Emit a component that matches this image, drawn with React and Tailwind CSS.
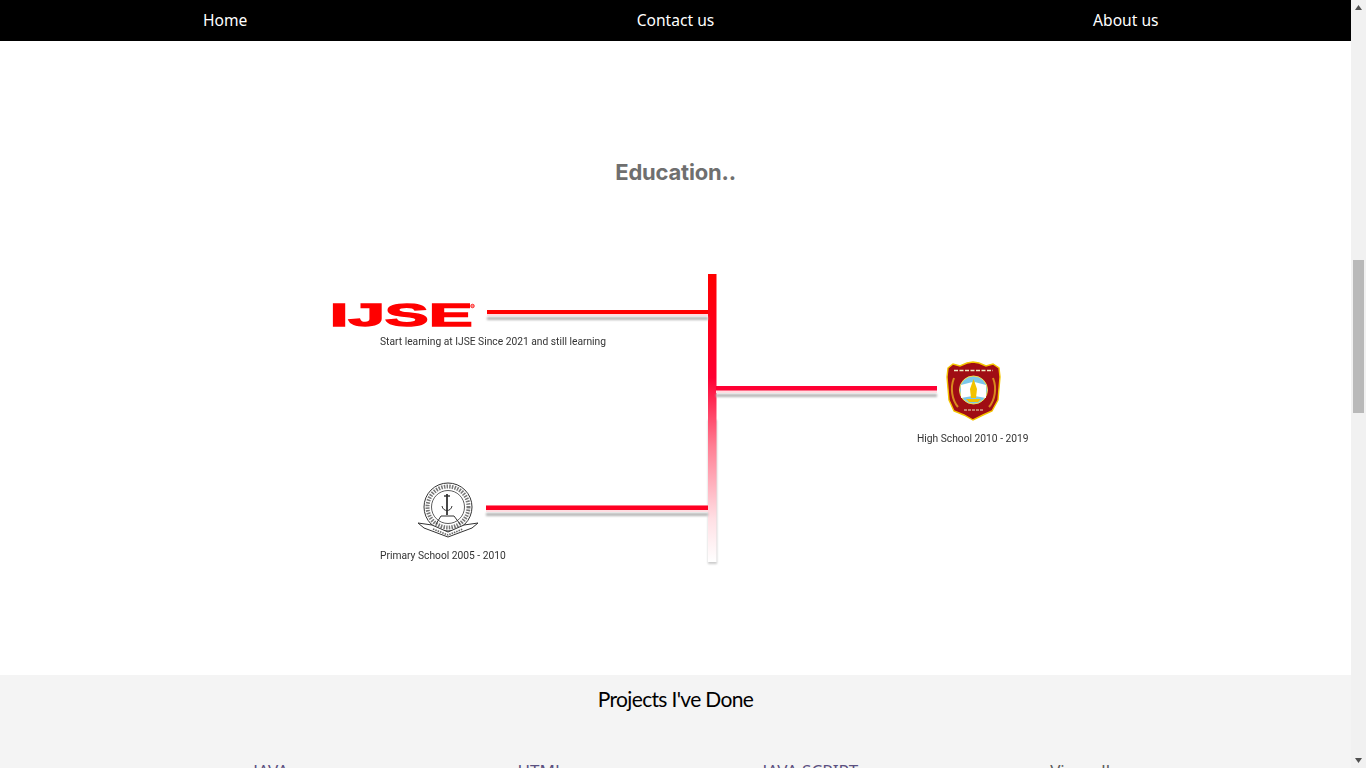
import React from 'react';

const navItems = ['Home', 'Contact us', 'About us'];

const projectLinks = [
  { label: 'JAVA', className: 'text-[#5b5080]' },
  { label: 'HTML', className: 'text-[#5b5080]' },
  { label: 'JAVA SCRIPT', className: 'text-[#5b5080]' },
  { label: 'View all', className: 'text-[#5a5a5a]' },
];

// the picture of the education timeline, coordinates are page px minus the svg origin (320, 260)
function EducationTimeline() {
  return (
    <svg width="720" height="320" viewBox="0 0 720 320" className="block blur-[0.35px]">
      <defs>
        <linearGradient id="spine" x1="0" y1="0" x2="0" y2="1">
          <stop offset="0" stopColor="#ff0000" />
          <stop offset="0.36" stopColor="#ff0033" />
          <stop offset="0.6" stopColor="#ff7f94" />
          <stop offset="0.85" stopColor="#ffdfe4" />
          <stop offset="1" stopColor="#ffffff" />
        </linearGradient>
        <filter id="soft" x="-10%" y="-150%" width="120%" height="400%">
          <feGaussianBlur stdDeviation="1.3" />
        </filter>
        <filter id="softSpine" x="-100%" y="-5%" width="300%" height="110%">
          <feGaussianBlur stdDeviation="0.8" />
        </filter>
      </defs>

      {/* spine */}
      <rect x="388" y="160" width="9" height="144" fill="#b4b4b4" opacity="0.7" filter="url(#softSpine)" />
      <rect x="388" y="14" width="8.5" height="288" fill="url(#spine)" />

      {/* branches */}
      <rect x="167" y="57" width="221" height="3" fill="#b4b4b4" filter="url(#soft)" />
      <rect x="167" y="50" width="221" height="6" fill="#ffdde2" />
      <rect x="167" y="50" width="221" height="4" fill="#ff0000" />

      <rect x="396" y="134" width="221" height="3" fill="#b4b4b4" filter="url(#soft)" />
      <rect x="396" y="126" width="221" height="7" fill="#ffdde2" />
      <rect x="396" y="126" width="221" height="4.5" fill="#ff0033" />

      <rect x="166" y="253" width="222" height="3" fill="#b4b4b4" filter="url(#soft)" />
      <rect x="166" y="245.5" width="222" height="6.5" fill="#ffdde2" />
      <rect x="166" y="245.5" width="222" height="4.5" fill="#ff0022" />

      {/* IJSE logo */}
      <text
        x="0"
        y="0"
        transform="translate(10 65.5) scale(2.1 1)"
        fontFamily="'Liberation Sans', sans-serif"
        fontWeight="700"
        fontSize="31"
        letterSpacing="0.2"
        fill="#ff0000"
        stroke="#ff0000"
        strokeWidth="1.4"
      >
        IJSE
      </text>
      <circle cx="152.5" cy="46" r="1.8" fill="#ff8a8a" stroke="#ff0000" strokeWidth="0.7" />
      <text x="60" y="85" fontFamily="Roboto, sans-serif" fontSize="10.25" fill="#333333">
        Start learning at IJSE Since 2021 and still learning
      </text>

      {/* high school crest */}
      <path
        d="M628 108 L633 104 L640 106 L647 103 L653 102 L659 103 L666 106 L673 104 L679 108 L680 117 L678 140 L672 151 L663 155 L653 160 L644 155 L634 151 L629 140 L627 117 Z"
        fill="#a00d14"
        stroke="#f4c500"
        strokeWidth="1.4"
      />
      <circle cx="653.5" cy="130" r="14" fill="#7cc8ea" stroke="#f4e04d" strokeWidth="1" />
      <path d="M641 125 L652.5 122 L652.5 136 L641 138 Z" fill="#ffffff" />
      <path d="M654.5 122 L666 125 L666 138 L654.5 136 Z" fill="#ffffff" />
      <path d="M653.5 119 L657 129 L656 138 L651 138 L650 129 Z" fill="#f2c200" />
      <path d="M646 139 H661 L658 142 H649 Z" fill="#f2c200" />
      <path d="M634 118 C630 128 632 140 638 147" fill="none" stroke="#d98a1e" strokeWidth="2" />
      <path d="M673 118 C677 128 675 140 669 147" fill="none" stroke="#d98a1e" strokeWidth="2" />
      <path d="M634 110.5 H673" stroke="#f2e9c0" strokeWidth="1.5" strokeDasharray="4 1.5" />
      <path d="M644 150 H663" stroke="#f2e9c0" strokeWidth="1" strokeDasharray="3 1" />
      <text x="597" y="182" fontFamily="Roboto, sans-serif" fontSize="10.25" fill="#333333">
        High School 2010 - 2019
      </text>

      {/* primary school crest */}
      <g fill="none" stroke="#333333">
        <circle cx="128" cy="247" r="24" strokeWidth="1" />
        <circle cx="128" cy="247" r="16.5" strokeWidth="0.8" />
        <circle cx="128" cy="247" r="20.5" strokeWidth="4" strokeDasharray="1.5 1.2" stroke="#777777" />
        <path d="M127 234 V255" strokeWidth="1.8" />
        <path d="M124 236 H130" strokeWidth="1.4" />
        <path d="M122 246 C123 252 131 252 132 246" strokeWidth="1" />
        <path d="M116 264 L121 256 H134 L140 264" strokeWidth="1" />
        <path d="M98 263 L112 265 L128 272 L144 265 L158 263 L152 268 L144 271 L128 277 L112 271 L104 268 Z" strokeWidth="1" fill="#ffffff" />
        <path d="M113 269 L128 275 L143 269" strokeWidth="1.6" strokeDasharray="1.5 1" stroke="#666666" />
      </g>
      <text x="60" y="299" fontFamily="Roboto, sans-serif" fontSize="10.25" fill="#333333">
        Primary School 2005 - 2010
      </text>
    </svg>
  );
}

function Scrollbar() {
  return (
    <div className="w-[15px] shrink-0 h-screen bg-[#f1f1f1] flex flex-col items-center">
      <svg width="15" height="15" viewBox="0 0 15 15" className="shrink-0">
        <path d="M7.5 5 L11 10 H4 Z" fill="#505050" />
      </svg>
      <div className="mt-[245px] w-[11px] h-[153px] bg-[#b9b9b9]"></div>
      <div className="flex-1"></div>
      <svg width="15" height="15" viewBox="0 0 15 15" className="shrink-0">
        <path d="M7.5 10 L11 5 H4 Z" fill="#505050" />
      </svg>
    </div>
  );
}

export default function App() {
  return (
    <div className="flex h-screen overflow-hidden bg-white font-['Noto_Sans',sans-serif]">
      <div className="flex-1 min-w-0 h-screen overflow-hidden">
        {/* Nav */}
        <nav className="h-[41px] pt-[8px] bg-black grid grid-cols-3 text-center text-white text-[15.6px] leading-[24px]">
          {navItems.map((item) => (
            <a key={item} href="#" className="block">
              {item}
            </a>
          ))}
        </nav>

        {/* Education */}
        <section className="h-[634px] pt-[116px] flex flex-col items-center">
          <h2 className="font-['Inter',sans-serif] text-[22px] leading-[30px] font-bold tracking-[-0.2px] text-[#6f6f6f]">
            Education..
          </h2>
          <div className="mt-[73px] w-full pl-[320px]">
            <EducationTimeline />
          </div>
        </section>

        {/* Projects */}
        <section className="bg-[#f4f4f4] h-[200px] pt-[9px]">
          <h2 className="text-center font-['Lato',sans-serif] text-[21px] leading-[30px] tracking-[-0.67px] text-black">
            Projects I've Done
          </h2>
          <div className="mt-[45px] px-[136px] grid grid-cols-4 text-center text-[17px] leading-6">
            {projectLinks.map((link) => (
              <a key={link.label} href="#" className={link.className}>
                {link.label}
              </a>
            ))}
          </div>
        </section>
      </div>
      <Scrollbar />
    </div>
  );
}
